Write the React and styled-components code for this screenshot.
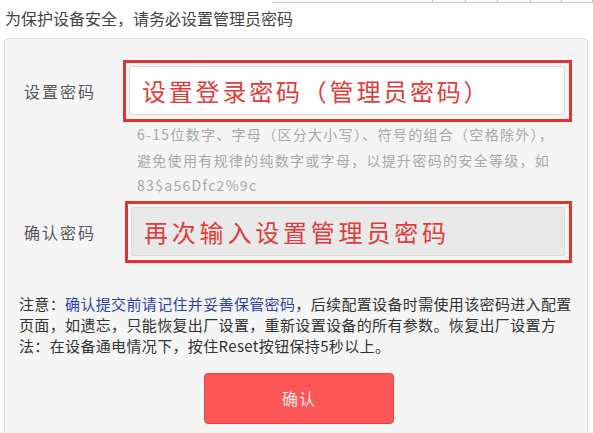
import { createGlobalStyle, styled } from 'styled-components'

const GlobalStyle = createGlobalStyle`
    html, body {
        margin: 0;
        padding: 0;
        background: #ffffff;
        overflow: hidden;
    }
    body {
        font-family: "Noto Sans CJK SC", "Liberation Sans", sans-serif;
    }
`

const Page = styled.div`
    width: 593px;
    height: 433px;
    overflow: hidden;
`

const TopStrip = styled.div`
    display: flex;
    height: 2px;
    margin-left: 272px;
    border-bottom: 1px solid #c8c8c8;
`

const StripCell = styled.div`
    width: ${p => p.$w}px;
    border-right: 1px solid #c8c8c8;
`

const Title = styled.h1`
    margin: 3px 0 0 5px;
    font-size: 16px;
    line-height: 24px;
    font-weight: normal;
    color: #444;
`

const Panel = styled.section`
    margin: 8px 0 0 4px;
    width: 584px;
    padding: 21px 15px 30px 14px;
    box-sizing: border-box;
    background: #f5f5f5;
    border: 1px solid #dcdcdc;
    border-radius: 4px;
`

const FieldRow = styled.div`
    display: flex;
    align-items: center;
`

const Label = styled.label`
    width: ${p => p.$w}px;
    padding-left: 5px;
    box-sizing: border-box;
    flex-shrink: 0;
    font-size: 16px;
    letter-spacing: 2px;
    color: #555;
`

const Highlight = styled.div`
    width: ${p => p.$w}px;
    height: 62px;
    box-sizing: border-box;
    border: 3px solid #e03434;
    padding: 3px 4px 4px 3px;
    display: flex;
`

const Input = styled.div`
    flex: 1;
    display: flex;
    align-items: center;
    padding-left: 12px;
    background: ${p => (p.$filled ? '#e9e9e9' : '#ffffff')};
    border: 1px solid #dadada;
    border-radius: 2px;
    font-size: 24px;
    letter-spacing: ${p => (p.$filled ? 3.8 : 2.8)}px;
    color: #e03c3c;
    white-space: nowrap;
`

const Hint = styled.p`
    margin: 0 0 2px 118px;
    font-size: 14px;
    line-height: 25.5px;
    letter-spacing: 1.3px;
    color: #a8a8a8;
    white-space: nowrap;
`

const Note = styled.p`
    margin: 30px 0 0 0;
    font-size: 15px;
    line-height: 21px;
    letter-spacing: 0.35px;
    color: #333;
`

const NoteLink = styled.span`
    color: #2b3fae;
`

const ButtonRow = styled.div`
    display: flex;
    padding-left: 185px;
    margin-top: 17px;
`

const Confirm = styled.button`
    width: 190px;
    height: 51px;
    background: #fd5656;
    border: 1px solid #e24444;
    border-radius: 4px;
    color: #ffe8e8;
    font-family: inherit;
    font-size: 16px;
    letter-spacing: 1px;
`

export default function App() {
  return (
    <Page>
      <GlobalStyle />
      <TopStrip>
        {[162, 32, 32, 32, 31, 30].map((w, i) => (
          <StripCell key={i} $w={w} />
        ))}
      </TopStrip>
      <Title>为保护设备安全，请务必设置管理员密码</Title>
      <Panel>
        <FieldRow>
          <Label $w={104}>设置密码</Label>
          <Highlight $w={451}>
            <Input>设置登录密码（管理员密码）</Input>
          </Highlight>
        </FieldRow>
        <Hint>
          6-15位数字、字母（区分大小写）、符号的组合（空格除外），
          <br />
          避免使用有规律的纯数字或字母，以提升密码的安全等级，如
          <br />
          83$a56Dfc2%9c
        </Hint>
        <FieldRow>
          <Label $w={106}>确认密码</Label>
          <Highlight $w={449}>
            <Input $filled>再次输入设置管理员密码</Input>
          </Highlight>
        </FieldRow>
        <Note>
          注意：<NoteLink>确认提交前请记住并妥善保管密码</NoteLink>，后续配置设备时需使用该密码进入配置页面，如遗忘，只能恢复出厂设置，重新设置设备的所有参数。恢复出厂设置方法：在设备通电情况下，按住Reset按钮保持5秒以上。
        </Note>
        <ButtonRow>
          <Confirm>确认</Confirm>
        </ButtonRow>
      </Panel>
    </Page>
  )
}
